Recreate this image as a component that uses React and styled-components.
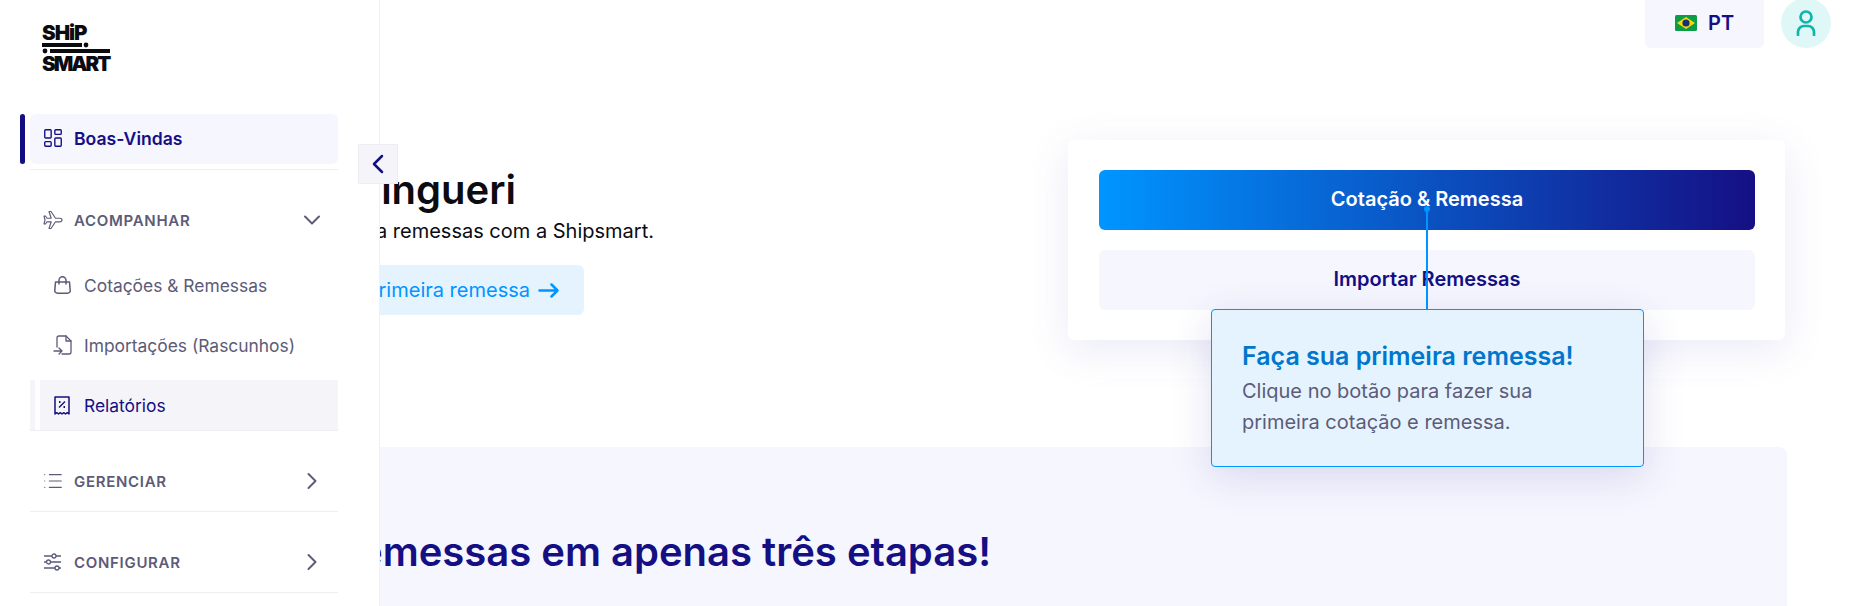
import React from 'react';
import styled, { createGlobalStyle } from 'styled-components';
import { ChevronDown, ChevronLeft, ChevronRight, LayoutDashboard, List } from 'lucide-react';

const navy = '#150f84';
const slate = '#5c5b78';
const blue = '#0095ff';
const tint = '#f6f6fe';

const GlobalStyle = createGlobalStyle`
  html, body {
    margin: 0;
    height: 100%;
    overflow: hidden;
    background: #fff;
    font-family: Inter, "Liberation Sans", sans-serif;
  }
`;

const Page = styled.div`
  position: relative;
  height: 606px;
  overflow: hidden;
`;

const Sidebar = styled.aside`
  position: absolute;
  top: 0;
  left: 0;
  bottom: 0;
  z-index: 2;
  box-sizing: border-box;
  width: 380px;
  padding: 24px 41px 0 30px;
  background: #fff;
  border-right: 1px solid #f0f0f5;
`;

const LogoWrap = styled.div`
  height: 90px;
  padding-left: 12px;
`;

const Divider = styled.div`
  height: 1px;
  background: #eeeef2;
`;

const IconSlot = styled.span`
  display: flex;
  align-items: center;
  justify-content: center;
  flex: none;
  width: ${(p) => p.$width || 22}px;
`;

const ActiveRow = styled.div`
  position: relative;
  display: flex;
  align-items: center;
  gap: 10px;
  box-sizing: border-box;
  height: 50px;
  padding: 0 0 2px 12px;
  margin-bottom: 5px;
  border-radius: 6px;
  background: ${tint};
  color: ${navy};
  font-size: 17.6px;
  font-weight: 600;
  &::before {
    content: '';
    position: absolute;
    left: -10px;
    top: 0;
    bottom: 0;
    width: 5px;
    border-radius: 3px;
    background: ${navy};
  }
`;

const Group = styled.div`
  display: flex;
  align-items: center;
  gap: 10px;
  height: ${(p) => p.$height}px;
  padding: ${(p) => p.$top}px 12px 0 12px;
  box-sizing: border-box;
  color: ${slate};
  font-size: 15px;
  font-weight: 600;
  letter-spacing: 0.7px;
`;

const GroupLabel = styled.span`
  flex: 1;
`;

const SubItem = styled.div`
  position: relative;
  display: flex;
  align-items: center;
  gap: 12px;
  height: ${(p) => (p.$active ? 50 : 60)}px;
  padding-left: 12px;
  margin-left: 10px;
  margin-top: ${(p) => (p.$active ? 5 : 0)}px;
  background: ${(p) => (p.$active ? '#f5f5f9' : 'transparent')};
  color: ${(p) => (p.$active ? navy : slate)};
  font-size: 17.4px;
  &::before {
    content: '';
    display: ${(p) => (p.$active ? 'block' : 'none')};
    position: absolute;
    left: -10px;
    top: 0;
    bottom: 0;
    width: 5px;
    background: #f5f5f9;
  }
`;

const CollapseButton = styled.button`
  position: absolute;
  top: 144px;
  left: 358px;
  z-index: 3;
  display: flex;
  align-items: center;
  justify-content: center;
  box-sizing: border-box;
  width: 40px;
  height: 40px;
  padding: 0;
  border: 1px solid #ececf2;
  background: #f5f5f9;
  color: ${navy};
`;

const Main = styled.main`
  box-sizing: border-box;
  height: 606px;
  padding-right: 77px;
`;

const TopBar = styled.header`
  display: flex;
  justify-content: flex-end;
  align-items: flex-start;
  gap: 17px;
  height: 140px;
  margin-right: -44px;
`;

const LangButton = styled.div`
  display: flex;
  align-items: center;
  gap: 11px;
  box-sizing: border-box;
  width: 119px;
  height: 48px;
  padding: 0 0 2px 30px;
  border-radius: 0 0 6px 6px;
  background: ${tint};
  color: ${navy};
  font-size: 20px;
  font-weight: 600;
`;

const Avatar = styled.div`
  display: flex;
  align-items: center;
  justify-content: center;
  width: 50px;
  height: 50px;
  margin-top: -2px;
  border-radius: 50%;
  background: #dff7f6;
  color: #0db5aa;
`;

const Hero = styled.section`
  display: flex;
  justify-content: space-between;
  align-items: flex-start;
  height: 307px;
`;

/* the start of these lines sits under the sidebar, so they are set from the right */
const Welcome = styled.div`
  display: flex;
  flex-direction: column;
  align-items: flex-end;
  width: 654px;
  padding-top: 26px;
`;

const Title = styled.h1`
  margin: 0 138px 0 0;
  font-size: 40px;
  line-height: 48px;
  font-weight: 600;
  color: #0b0b12;
  white-space: nowrap;
`;

const Lead = styled.p`
  margin: 3px 0 0;
  font-size: 20px;
  line-height: 28px;
  color: #0b0b12;
  white-space: nowrap;
`;

const StartButton = styled.div`
  display: flex;
  align-items: center;
  gap: 8px;
  box-sizing: border-box;
  height: 50px;
  margin: 20px 70px 0 0;
  padding: 0 25px;
  border-radius: 6px;
  background: #e5f3ff;
  color: ${blue};
  font-size: 20px;
  white-space: nowrap;
`;

const ActionCard = styled.div`
  position: relative;
  display: flex;
  flex-direction: column;
  gap: 20px;
  box-sizing: border-box;
  width: 717px;
  height: 200px;
  margin-right: 2px;
  padding: 30px 30px 30px 31px;
  border-radius: 6px;
  background: #fff;
  box-shadow: 0 10px 40px rgba(90, 90, 190, 0.13);
`;

const ActionButton = styled.div`
  display: flex;
  align-items: center;
  justify-content: center;
  height: 60px;
  padding-bottom: 3px;
  box-sizing: border-box;
  border-radius: 6px;
  background: ${(p) => (p.$primary ? `linear-gradient(90deg, ${blue}, ${navy})` : tint)};
  color: ${(p) => (p.$primary ? '#fff' : navy)};
  font-size: 20px;
  font-weight: 600;
`;

const Connector = styled.div`
  position: absolute;
  left: 358px;
  top: 69px;
  width: 2px;
  height: 101px;
  background: ${blue};
  &::before {
    content: '';
    position: absolute;
    left: -2px;
    top: -3px;
    width: 6px;
    height: 6px;
    border-radius: 50%;
    background: ${blue};
  }
`;

const Tip = styled.div`
  position: absolute;
  left: 143px;
  top: 169px;
  z-index: 1;
  box-sizing: border-box;
  width: 433px;
  height: 158px;
  padding: 31px 30px;
  border: 1px solid ${blue};
  border-radius: 4px;
  background: #e5f3ff;
  box-shadow: 0 10px 40px rgba(60, 60, 170, 0.16);
`;

const TipTitle = styled.h3`
  margin: 0 0 5px;
  font-size: 25px;
  line-height: 30px;
  font-weight: 600;
  color: #0077cc;
`;

const TipText = styled.p`
  margin: 0;
  font-size: 20px;
  line-height: 31px;
  color: ${slate};
`;

const Band = styled.section`
  height: 159px;
  padding-top: 81px;
  box-sizing: border-box;
  border-radius: 8px 8px 0 0;
  background: ${tint};
`;

const BandTitle = styled.h2`
  width: 991px;
  margin: 0;
  font-size: 40px;
  line-height: 48px;
  font-weight: 600;
  text-align: right;
  color: ${navy};
  white-space: nowrap;
`;

const ShipLogo = () => (
  <svg width="70" height="48" viewBox="0 0 70 48" fill="#0b0b12" overflow="visible">
    <text x="0" y="16" fontFamily="Inter" fontWeight="900" fontSize="20.5" letterSpacing="-1">SHiP</text>
    <rect x="0" y="19" width="40" height="4" />
    <circle cx="44" cy="21" r="2.4" />
    <circle cx="3" cy="27" r="2.4" />
    <rect x="8" y="25" width="60" height="4" />
    <text x="0" y="47" fontFamily="Inter" fontWeight="900" fontSize="20.5" letterSpacing="-2">SMART</text>
  </svg>
);

const PlaneIcon = () => (
  <svg width="22" height="20" viewBox="0 0 20 20" fill="none" stroke="currentColor" strokeWidth="1.15" strokeLinejoin="round">
    <path d="M19 10c0-1-1-1.8-2.5-1.8h-4L8 1.5H6l2.2 6.7H4L2.5 6H1l1 4-1 4h1.5L4 11.8h4.2L6 18.5h2l4.5-6.7h4C18 11.8 19 11 19 10z" />
  </svg>
);

const BagIcon = () => (
  <svg width="17" height="18" viewBox="0 0 17 18" fill="none" stroke="currentColor" strokeWidth="1.5" strokeLinecap="round" strokeLinejoin="round">
    <path d="M1.5 6h14l.7 8.3a2.6 2.6 0 0 1-2.6 2.9H3.4A2.6 2.6 0 0 1 .8 14.3z" />
    <path d="M5 8V4.2a3.5 3.5 0 0 1 7 0V8" />
  </svg>
);

const ImportIcon = () => (
  <svg width="19" height="20" viewBox="0 0 19 20" fill="none" stroke="currentColor" strokeWidth="1.3" strokeLinecap="round" strokeLinejoin="round">
    <path d="M4 12V3a2 2 0 0 1 2-2h7l5 5v11a2 2 0 0 1-2 2H9" />
    <path d="M13 1v5h5" />
    <path d="M1 16h8M6 13l3 3-3 3" />
  </svg>
);

const ReceiptIcon = () => (
  <svg width="16" height="19" viewBox="0 0 16 19" fill="none" stroke="currentColor" strokeWidth="1.5" strokeLinejoin="round">
    <path d="M1 1h14v17l-1.75-1.3-1.75 1.3-1.75-1.3L8 18l-1.75-1.3L4.5 18l-1.75-1.3L1 18z" />
    <path d="M5 11.5l6-6" />
    <path d="M5 6h1.5M9.5 11h1.5" strokeWidth="1.8" />
  </svg>
);

const SlidersIcon = () => (
  <svg width="18" height="18" viewBox="0 0 18 18" fill="none" stroke="currentColor" strokeWidth="1.3">
    <path d="M0 3h8M12 3h5M0 9h2.5M6.5 9H17M0 15h11M15 15h2" />
    <circle cx="10" cy="3" r="2" />
    <circle cx="4.5" cy="9" r="2" />
    <circle cx="13" cy="15" r="2" />
  </svg>
);

const UserIcon = () => (
  <svg width="20" height="26" viewBox="0 0 20 26" fill="none" stroke="currentColor" strokeWidth="2.7" strokeLinecap="round">
    <circle cx="10" cy="7" r="5.5" />
    <path d="M2 25v-3a6 6 0 0 1 6-6h4a6 6 0 0 1 6 6v3" />
  </svg>
);

const ArrowIcon = () => (
  <svg width="21" height="15" viewBox="0 0 21 15" fill="none" stroke="currentColor" strokeWidth="2.5" strokeLinecap="round" strokeLinejoin="round">
    <path d="M1.5 7.5h18M13.5 1.5l6 6-6 6" />
  </svg>
);

const BrazilFlag = () => (
  <svg width="22" height="16" viewBox="0 0 22 16">
    <rect width="22" height="16" rx="1.5" fill="#0a9c46" />
    <path d="M11 2l9 6-9 6-9-6z" fill="#fcd800" />
    <circle cx="11" cy="8" r="3.6" fill="#16307d" />
  </svg>
);

export default function App() {
  return (
    <Page>
      <GlobalStyle />
      <Sidebar>
        <LogoWrap>
          <ShipLogo />
        </LogoWrap>
        <ActiveRow>
          <IconSlot>
            <LayoutDashboard size={22} strokeWidth={1.5} />
          </IconSlot>
          Boas-Vindas
        </ActiveRow>
        <Divider />
        <Group $height={85} $top={15}>
          <IconSlot>
            <PlaneIcon />
          </IconSlot>
          <GroupLabel>ACOMPANHAR</GroupLabel>
          <ChevronDown size={28} strokeWidth={1.7} />
        </Group>
        <SubItem>
          <IconSlot $width={20}>
            <BagIcon />
          </IconSlot>
          Cotações &amp; Remessas
        </SubItem>
        <SubItem>
          <IconSlot $width={20}>
            <ImportIcon />
          </IconSlot>
          Importações (Rascunhos)
        </SubItem>
        <SubItem $active>
          <IconSlot $width={20}>
            <ReceiptIcon />
          </IconSlot>
          Relatórios
        </SubItem>
        <Divider />
        <Group $height={80} $top={20}>
          <IconSlot>
            <List size={22} strokeWidth={1.2} />
          </IconSlot>
          <GroupLabel>GERENCIAR</GroupLabel>
          <ChevronRight size={28} strokeWidth={1.7} />
        </Group>
        <Divider />
        <Group $height={80} $top={20}>
          <IconSlot>
            <SlidersIcon />
          </IconSlot>
          <GroupLabel>CONFIGURAR</GroupLabel>
          <ChevronRight size={28} strokeWidth={1.7} />
        </Group>
        <Divider />
      </Sidebar>
      <CollapseButton>
        <ChevronLeft size={32} strokeWidth={1.9} />
      </CollapseButton>
      <Main>
        <TopBar>
          <LangButton>
            <BrazilFlag />
            PT
          </LangButton>
          <Avatar>
            <UserIcon />
          </Avatar>
        </TopBar>
        <Hero>
          <Welcome>
            <Title>Olá, Domingueri</Title>
            <Lead>Faça sua primeira remessas com a Shipsmart.</Lead>
            <StartButton>
              Faça sua primeira remessa
              <ArrowIcon />
            </StartButton>
          </Welcome>
          <ActionCard>
            <ActionButton $primary>Cotação &amp; Remessa</ActionButton>
            <ActionButton>Importar Remessas</ActionButton>
            <Connector />
            <Tip>
              <TipTitle>Faça sua primeira remessa!</TipTitle>
              <TipText>
                Clique no botão para fazer sua
                <br />
                primeira cotação e remessa.
              </TipText>
            </Tip>
          </ActionCard>
        </Hero>
        <Band>
          <BandTitle>Faça suas remessas em apenas três etapas!</BandTitle>
        </Band>
      </Main>
    </Page>
  );
}
